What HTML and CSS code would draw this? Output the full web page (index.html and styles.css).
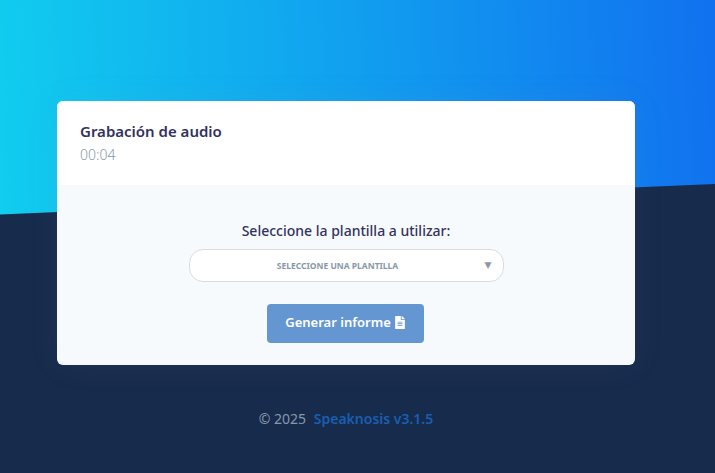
FILE: index.html
```html
<!DOCTYPE html>
<html lang="es">
<head>
<meta charset="utf-8">
<title>Grabación de audio</title>
<link rel="stylesheet" href="styles.css">
</head>
<body>
<div class="hero"></div>
<main class="page">
  <section class="card">
    <header class="card-header">
      <h1 class="title">Grabación de audio</h1>
      <p class="time">00:04</p>
    </header>
    <div class="card-body">
      <label class="label">Seleccione la plantilla a utilizar:</label>
      <div class="select">
        <span class="select-text">SELECCIONE UNA PLANTILLA</span>
        <span class="caret">▼</span>
      </div>
      <button class="btn">Generar informe
        <svg class="file-icon" viewBox="0 0 384 512" aria-hidden="true"><path fill="currentColor" d="M224 136V0H24C10.700 0 0 10.700 0 24v464c0 13.300 10.700 24 24 24h336c13.300 0 24-10.700 24-24V160H248c-13.200 0-24-10.800-24-24zm64 236c0 6.600-5.400 12-12 12H108c-6.600 0-12-5.400-12-12v-8c0-6.600 5.400-12 12-12h168c6.600 0 12 5.400 12 12v8zm0-64c0 6.600-5.400 12-12 12H108c-6.600 0-12-5.400-12-12v-8c0-6.600 5.400-12 12-12h168c6.600 0 12 5.400 12 12v8zm0-72v8c0 6.600-5.400 12-12 12H108c-6.600 0-12-5.400-12-12v-8c0-6.600 5.400-12 12-12h168c6.600 0 12 5.400 12 12zm96-114.100v6.100H256V0h6.100c6.400 0 12.500 2.500 17 7l97.900 98c4.500 4.500 7 10.600 7 16.900z"/></svg>
      </button>
    </div>
  </section>
  <footer class="footer">
    <span class="copy">© 2025</span>
    <a class="brand" href="#">Speaknosis v3.1.5</a>
  </footer>
</main>
</body>
</html>
```

FILE: styles.css
```css
* { box-sizing: border-box; }

html, body {
  margin: 0;
  height: 100%;
}

body {
  position: relative;
  overflow: hidden;
  background: #172b4d;
  font-family: "Noto Sans", "Open Sans", "Liberation Sans", sans-serif;
}

.hero {
  position: absolute;
  left: 0;
  top: 0;
  width: 100%;
  height: 215px;
  background: linear-gradient(87deg, #11cdef 0%, #1171ef 100%);
  clip-path: polygon(0 0, 100% 0, 100% 184px, 0 214.500px);
}

.page {
  position: relative;
  display: flex;
  flex-direction: column;
  align-items: center;
  padding: 101px 80px 0 57px;
}

.card {
  width: 578px;
  height: 264px;
  border-radius: 6px;
  overflow: hidden;
  background: #f7fafc;
  box-shadow: 0 0 32px rgba(136, 152, 170, 0.08);
}

.card-header {
  height: 84px;
  padding: 19px 23px 0;
  background: #fff;
}

.title {
  margin: 0;
  font-size: 15px;
  line-height: 22px;
  font-weight: 600;
  color: #32325d;
}

.time {
  margin: 2px 0 0;
  font-size: 14px;
  line-height: 21px;
  font-weight: 300;
  color: #8898aa;
}

.card-body {
  display: flex;
  flex-direction: column;
  align-items: center;
  padding-top: 35px;
}

.label {
  font-size: 14px;
  line-height: 21px;
  font-weight: 500;
  color: #32325d;
}

.select {
  position: relative;
  display: flex;
  align-items: center;
  justify-content: center;
  width: 315px;
  height: 33px;
  margin-top: 8px;
  padding-right: 17px;
  background: #fff;
  border: 1px solid #d8dde3;
  border-radius: 14px;
}

.select-text {
  font-size: 8.500px;
  font-weight: 700;
  color: #8898aa;
}

.caret {
  position: absolute;
  right: 11px;
  top: 9px;
  font-family: "DejaVu Sans", sans-serif;
  font-size: 9px;
  line-height: 12px;
  color: #8898aa;
}

.btn {
  display: flex;
  align-items: center;
  justify-content: center;
  gap: 4px;
  width: 157px;
  height: 39px;
  margin-top: 22px;
  margin-left: -2px;
  padding: 0 0 3px;
  border: 0;
  border-radius: 4px;
  background: #6496d2;
  color: #fff;
  font-family: inherit;
  font-size: 13px;
  font-weight: 600;
}

.file-icon {
  width: 10px;
  height: 13px;
}

.footer {
  width: 578px;
  margin-top: 43px;
  text-align: center;
  font-size: 14px;
  line-height: 21px;
}

.copy {
  color: #8898aa;
  margin-right: 4px;
}

.brand {
  color: #1a5eb0;
  font-weight: 600;
  text-decoration: none;
}
```
